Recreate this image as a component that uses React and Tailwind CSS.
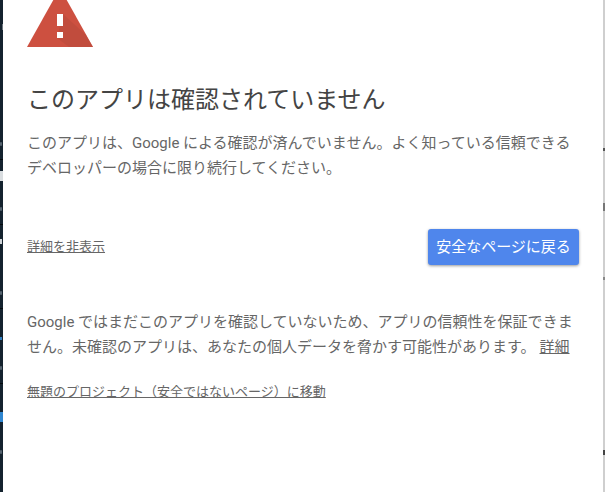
const font = { fontFamily: '"Roboto", "Noto Sans CJK JP", sans-serif' };

function Warning() {
  return (
    <svg width="66" height="47" viewBox="0 0 66 47" className="block">
      <polygon points="33,-12 66,47 0,47" fill="#cd5040" />
      <polygon points="36,14 59,35 66,47 42,47 30,38" fill="#b8483a" opacity="0.55" />
      <rect x="30" y="14" width="6" height="12" fill="#fff" />
      <rect x="30" y="32" width="6" height="6" fill="#fff" />
    </svg>
  );
}

export default function App() {
  return (
    <div className="flex h-[492px] w-[605px] overflow-hidden bg-white" style={font}>
      <div className="flex w-[3px] shrink-0 flex-col bg-[#14222e]">
        <div className="mt-[24px] h-[6px] w-[1px] self-end bg-[#6d7780]" />
        <div className="mt-[112px] h-[4px] w-[2px] rounded-full bg-[#566470]" />
        <div className="mt-[13px] h-px bg-[#05090d]" />
        <div className="mt-[11px] h-[10px] w-[3px] bg-[#d9dde0]" />
        <div className="mt-[26px] h-[4px] w-[2px] rounded-full bg-[#566470]" />
        <div className="mt-[13px] h-px bg-[#05090d]" />
        <div className="mt-[14px] h-[5px] w-[2px] bg-[#cfd4d8]" />
        <div className="mt-[47px] h-[4px] w-[2px] rounded-full bg-[#566470]" />
        <div className="mt-[13px] h-px bg-[#05090d]" />
        <div className="mt-[28px] h-[3px] w-[2px] bg-[#2f7fc4]" />
        <div className="mt-[26px] h-[4px] w-[2px] rounded-full bg-[#566470]" />
        <div className="mt-[13px] h-px bg-[#05090d]" />
        <div className="mt-[28px] h-[10px] w-[3px] bg-[#2f86d0]" />
        <div className="mt-[28px] h-[4px] w-[2px] rounded-full bg-[#566470]" />
      </div>
      <div className="flex min-w-0 flex-1 flex-col px-[24px]">
        <Warning />
        <h1 className="mt-[38px] whitespace-nowrap text-[24px] font-normal leading-[30px] text-[#444444]">
          このアプリは確認されていません
        </h1>
        <p className="mt-[16px] text-[15px] leading-[25px] text-[#666666]">
          このアプリは、Google による確認が済んでいません。よく知っている信頼できるデベロッパーの場合に限り続行してください。
        </p>
        <div className="mt-[48px] flex items-center justify-between">
          <a className="text-[13px] leading-[16px] text-[#666666] underline">詳細を非表示</a>
          <button className="h-[36px] w-[151px] rounded-[3px] bg-[#4f86ec] text-center text-[15px] text-white shadow-[0_1px_3px_rgba(0,0,0,0.4)]">
            安全なページに戻る
          </button>
        </div>
        <p className="mt-[45px] text-[15px] leading-[25px] text-[#666666]">
          Google ではまだこのアプリを確認していないため、アプリの信頼性を保証できません。未確認のアプリは、あなたの個人データを脅かす可能性があります。
          <a className="ml-[4px] underline">詳細</a>
        </p>
        <a className="mt-[24px] whitespace-nowrap text-[13px] leading-[16px] text-[#666666] underline">
          無題のプロジェクト（安全ではないページ）に移動
        </a>
      </div>
      <div className="flex w-[2px] shrink-0 flex-col bg-[#cfcfcf]">
        <div className="mt-[148px] h-[3px] bg-[#555555]" />
        <div className="mt-[52px] h-[8px] bg-[#777777]" />
        <div className="mt-[66px] h-[3px] bg-[#888888]" />
        <div className="mt-[170px] h-[5px] bg-[#444444]" />
      </div>
    </div>
  );
}
